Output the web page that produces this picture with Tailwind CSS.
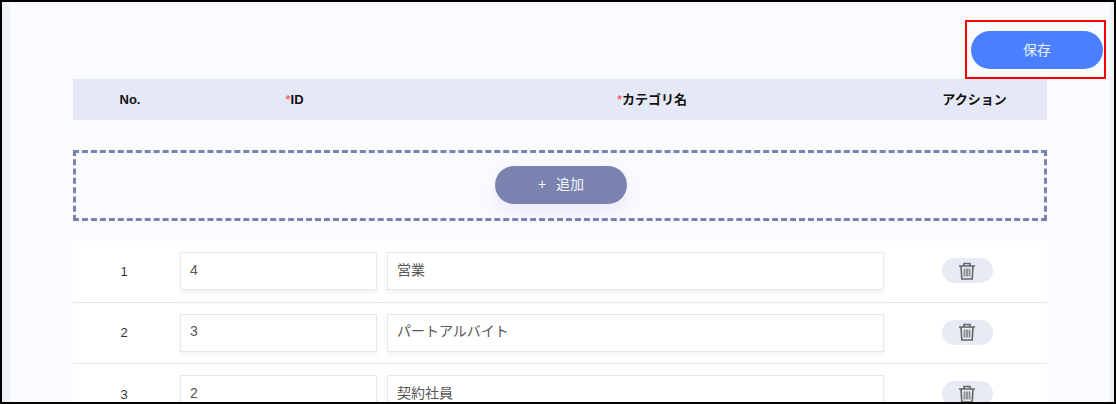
<!DOCTYPE html>
<html lang="ja">
<head>
    <meta charset="UTF-8">
    <title>カテゴリ</title>
    <script src="https://cdn.jsdelivr.net/npm/@tailwindcss/browser@4"></script>
</head>
<body class="overflow-hidden bg-black font-['Liberation_Sans','Noto_Sans_CJK_JP',sans-serif]">
    <div class="relative h-[404px] w-[1116px] overflow-hidden border-2 border-black bg-[#eff1f8] pl-2 pr-1">
        <!-- main area -->
        <div class="h-full bg-[#fafbfe] px-[63px]">
            <div class="flex h-[77px] justify-end pt-[29px]">
                <button class="-mr-[56px] h-[38px] w-[132px] shrink-0 rounded-full bg-[#4a80ff] text-[14px] text-white/90">保存</button>
            </div>

            <!-- table header -->
            <div class="grid h-[41px] grid-cols-[114px_215px_500px_145px] items-center bg-[#e5e8f6] text-center text-[13px] font-bold text-[#111]">
                <div>No.</div>
                <div><span class="font-normal text-[#f33]">*</span>ID</div>
                <div><span class="font-normal text-[#f33]">*</span>カテゴリ名</div>
                <div>アクション</div>
            </div>

            <!-- add -->
            <div class="mt-[30px] flex h-[71px] items-center justify-center border-[3px] border-dashed border-[#7a83b0]">
                <button class="mb-[2px] ml-[2px] flex h-[38px] w-[132px] items-center justify-center gap-[10px] rounded-full bg-[#7a83b0] text-[14px] text-white/90 shadow-[0_8px_18px_rgba(130,110,220,0.13)]">
                    <span>+</span><span>追加</span>
                </button>
            </div>

            <!-- rows -->
            <div class="mt-5 bg-white text-[14px] text-[#555]">
                <div class="flex h-[62px] items-center border-b border-[#e8e9ee]">
                    <div class="w-[102px] text-center text-[13px] text-[#333]">1</div>
                    <div class="mb-px ml-[5px] flex h-[38px] w-[197px] items-center border-[1.5px] border-[#e8e8e8] pb-[2px] pl-[9px] shadow-[0_3px_5px_rgba(0,0,0,0.05)]">4</div>
                    <div class="mb-px ml-[10px] flex h-[38px] w-[497px] items-center border-[1.5px] border-[#e8e8e8] pb-[2px] pl-[9px] shadow-[0_3px_5px_rgba(0,0,0,0.05)]">営業</div>
                    <div class="mb-[2px] ml-[58px] flex h-[25px] w-[51px] items-center justify-center rounded-full bg-[#e6ebf5]">
                        <svg class="-ml-px h-[20px] w-[18px]" viewBox="0 0 18 20" fill="none" stroke="#666" stroke-width="1.6"><path d="M1 5h16M6 5V2.500h6V5M3 5l.8 13h10.400L15 5"/><path d="M6.500 7.500v8M9 7.500v8M11.500 7.500v8" stroke-width="1.800" stroke="#8a8a8a"/></svg>
                    </div>
                </div>
                <div class="flex h-[61px] items-center border-b border-[#e8e9ee]">
                    <div class="w-[102px] text-center text-[13px] text-[#333]">2</div>
                    <div class="mb-px ml-[5px] flex h-[38px] w-[197px] items-center border-[1.5px] border-[#e8e8e8] pb-[2px] pl-[9px] shadow-[0_3px_5px_rgba(0,0,0,0.05)]">3</div>
                    <div class="mb-px ml-[10px] flex h-[38px] w-[497px] items-center border-[1.5px] border-[#e8e8e8] pb-[2px] pl-[9px] shadow-[0_3px_5px_rgba(0,0,0,0.05)]">パートアルバイト</div>
                    <div class="mb-[2px] ml-[58px] flex h-[25px] w-[51px] items-center justify-center rounded-full bg-[#e6ebf5]">
                        <svg class="-ml-px h-[20px] w-[18px]" viewBox="0 0 18 20" fill="none" stroke="#666" stroke-width="1.6"><path d="M1 5h16M6 5V2.500h6V5M3 5l.8 13h10.400L15 5"/><path d="M6.500 7.500v8M9 7.500v8M11.500 7.500v8" stroke-width="1.800" stroke="#8a8a8a"/></svg>
                    </div>
                </div>
                <div class="flex h-[61px] items-center">
                    <div class="w-[102px] text-center text-[13px] text-[#333]">3</div>
                    <div class="mb-px ml-[5px] flex h-[38px] w-[197px] items-center border-[1.5px] border-[#e8e8e8] pb-[2px] pl-[9px] shadow-[0_3px_5px_rgba(0,0,0,0.05)]">2</div>
                    <div class="mb-px ml-[10px] flex h-[38px] w-[497px] items-center border-[1.5px] border-[#e8e8e8] pb-[2px] pl-[9px] shadow-[0_3px_5px_rgba(0,0,0,0.05)]">契約社員</div>
                    <div class="mb-[2px] ml-[58px] flex h-[25px] w-[51px] items-center justify-center rounded-full bg-[#e6ebf5]">
                        <svg class="-ml-px h-[20px] w-[18px]" viewBox="0 0 18 20" fill="none" stroke="#666" stroke-width="1.6"><path d="M1 5h16M6 5V2.500h6V5M3 5l.8 13h10.400L15 5"/><path d="M6.500 7.500v8M9 7.500v8M11.500 7.500v8" stroke-width="1.800" stroke="#8a8a8a"/></svg>
                    </div>
                </div>
            </div>
        </div>

        <!-- red annotation box -->
        <div class="absolute left-[963px] top-[18px] h-[59px] w-[141px] border-2 border-[#f00]"></div>
    </div>
</body>
</html>
